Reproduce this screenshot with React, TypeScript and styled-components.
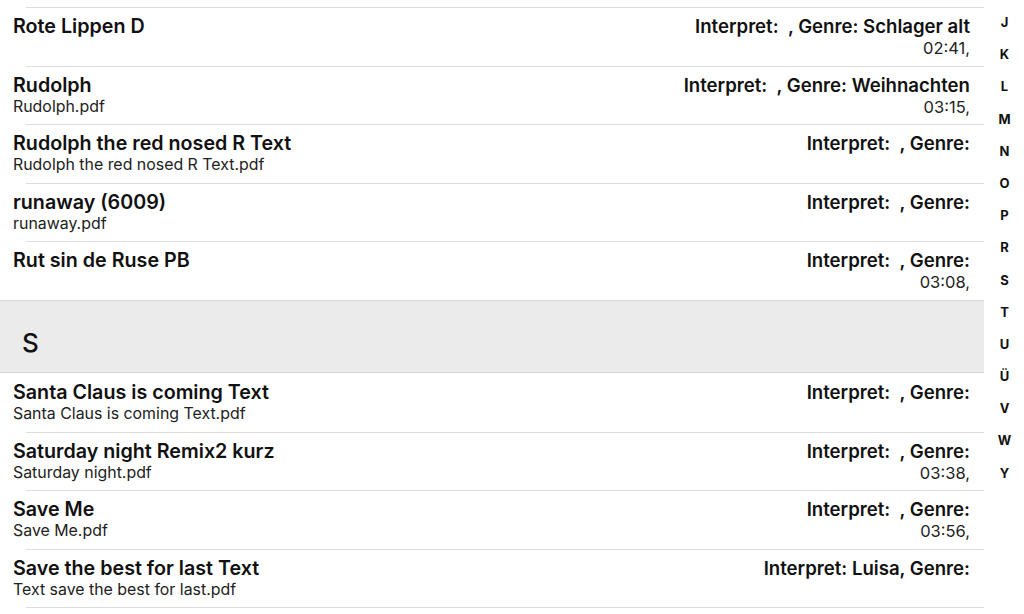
import React from "react";
import styled, { createGlobalStyle } from "styled-components";

const Global = createGlobalStyle`
  html, body { margin: 0; padding: 0; background: #ffffff; }
  body { font-family: Inter, "Liberation Sans", Arial, sans-serif; color: #111; overflow: hidden; }
`;

const Page = styled.div`
  display: flex;
  align-items: flex-start;
  width: 1024px;
  height: 614px;
  overflow: hidden;
  background: #fff;
`;

const List = styled.div`
  width: 984px;
  flex: none;
  padding-top: 7px;
  display: flex;
  flex-direction: column;
`;

const Row = styled.div<{ $noBorder?: boolean }>`
  flex: none;
  height: 58.6px;
  box-sizing: border-box;
  border-top: ${(p) => (p.$noBorder ? "none" : "1px solid #dcdcdc")};
  margin-left: 26px;
  padding: ${(p) => (p.$noBorder ? "7px" : "6px")} 14px 0 0;
  display: flex;
  justify-content: space-between;
`;

const Left = styled.div`
  display: flex;
  flex-direction: column;
  margin-left: -13px;
`;

const Title = styled.div`
  font-size: 19.7px;
  font-weight: 600;
  line-height: 25px;
  color: #111;
`;

const Sub = styled.div`
  font-size: 15.9px;
  line-height: 18px;
  color: #222;
`;

const Right = styled.div`
  display: flex;
  flex-direction: column;
  align-items: flex-end;
`;

const Meta = styled.div`
  font-size: 18.6px;
  font-weight: 600;
  line-height: 25px;
  color: #111;
  white-space: pre;
`;

const Time = styled.div`
  font-size: 16.5px;
  line-height: 18px;
  color: #222;
`;

const Section = styled.div`
  flex: none;
  height: 73px;
  box-sizing: border-box;
  background: #ebebeb;
  border-top: 1px solid #d6d6d6;
  border-bottom: 1px solid #d6d6d6;
  display: flex;
  align-items: center;
  padding: 13px 0 0 22px;
  font-size: 26px;
  font-weight: 500;
  color: #111;
`;

const Index = styled.div`
  width: 40px;
  flex: none;
  display: flex;
  flex-direction: column;
  align-items: center;
  padding-top: 13px;
`;

const Letter = styled.div`
  height: 32.2px;
  font-size: 13px;
  font-weight: 700;
  line-height: 18px;
  color: #111;
  padding-left: 1px;
`;

type Item = { t: string; s?: string; m: string; d?: string };

const before: Item[] = [
  { t: "Rote Lippen D", m: "Interpret:  , Genre: Schlager alt", d: "02:41," },
  { t: "Rudolph", s: "Rudolph.pdf", m: "Interpret:  , Genre: Weihnachten", d: "03:15," },
  { t: "Rudolph the red nosed R Text", s: "Rudolph the red nosed R Text.pdf", m: "Interpret:  , Genre:" },
  { t: "runaway (6009)", s: "runaway.pdf", m: "Interpret:  , Genre:" },
  { t: "Rut sin de Ruse PB", m: "Interpret:  , Genre:", d: "03:08," },
];

const after: Item[] = [
  { t: "Santa Claus is coming Text", s: "Santa Claus is coming Text.pdf", m: "Interpret:  , Genre:" },
  { t: "Saturday night Remix2 kurz", s: "Saturday night.pdf", m: "Interpret:  , Genre:", d: "03:38," },
  { t: "Save Me", s: "Save Me.pdf", m: "Interpret:  , Genre:", d: "03:56," },
  { t: "Save the best for last Text", s: "Text save the best for last.pdf", m: "Interpret: Luisa, Genre:" },
];

const letters = ["J", "K", "L", "M", "N", "O", "P", "R", "S", "T", "U", "Ü", "V", "W", "Y"];

const SongRow = ({ it, first }: { it: Item; first?: boolean }) => (
  <Row $noBorder={first}>
    <Left>
      <Title>{it.t}</Title>
      {it.s && <Sub>{it.s}</Sub>}
    </Left>
    <Right>
      <Meta>{it.m}</Meta>
      {it.d && <Time>{it.d}</Time>}
    </Right>
  </Row>
);

export default function App() {
  return (
    <>
      <Global />
      <Page>
        <List>
          {before.map((it) => (
            <SongRow key={it.t} it={it} />
          ))}
          <Section>S</Section>
          {after.map((it, i) => (
            <SongRow key={it.t} it={it} first={i === 0} />
          ))}
          <Row />
        </List>
        <Index>
          {letters.map((l) => (
            <Letter key={l}>{l}</Letter>
          ))}
        </Index>
      </Page>
    </>
  );
}
